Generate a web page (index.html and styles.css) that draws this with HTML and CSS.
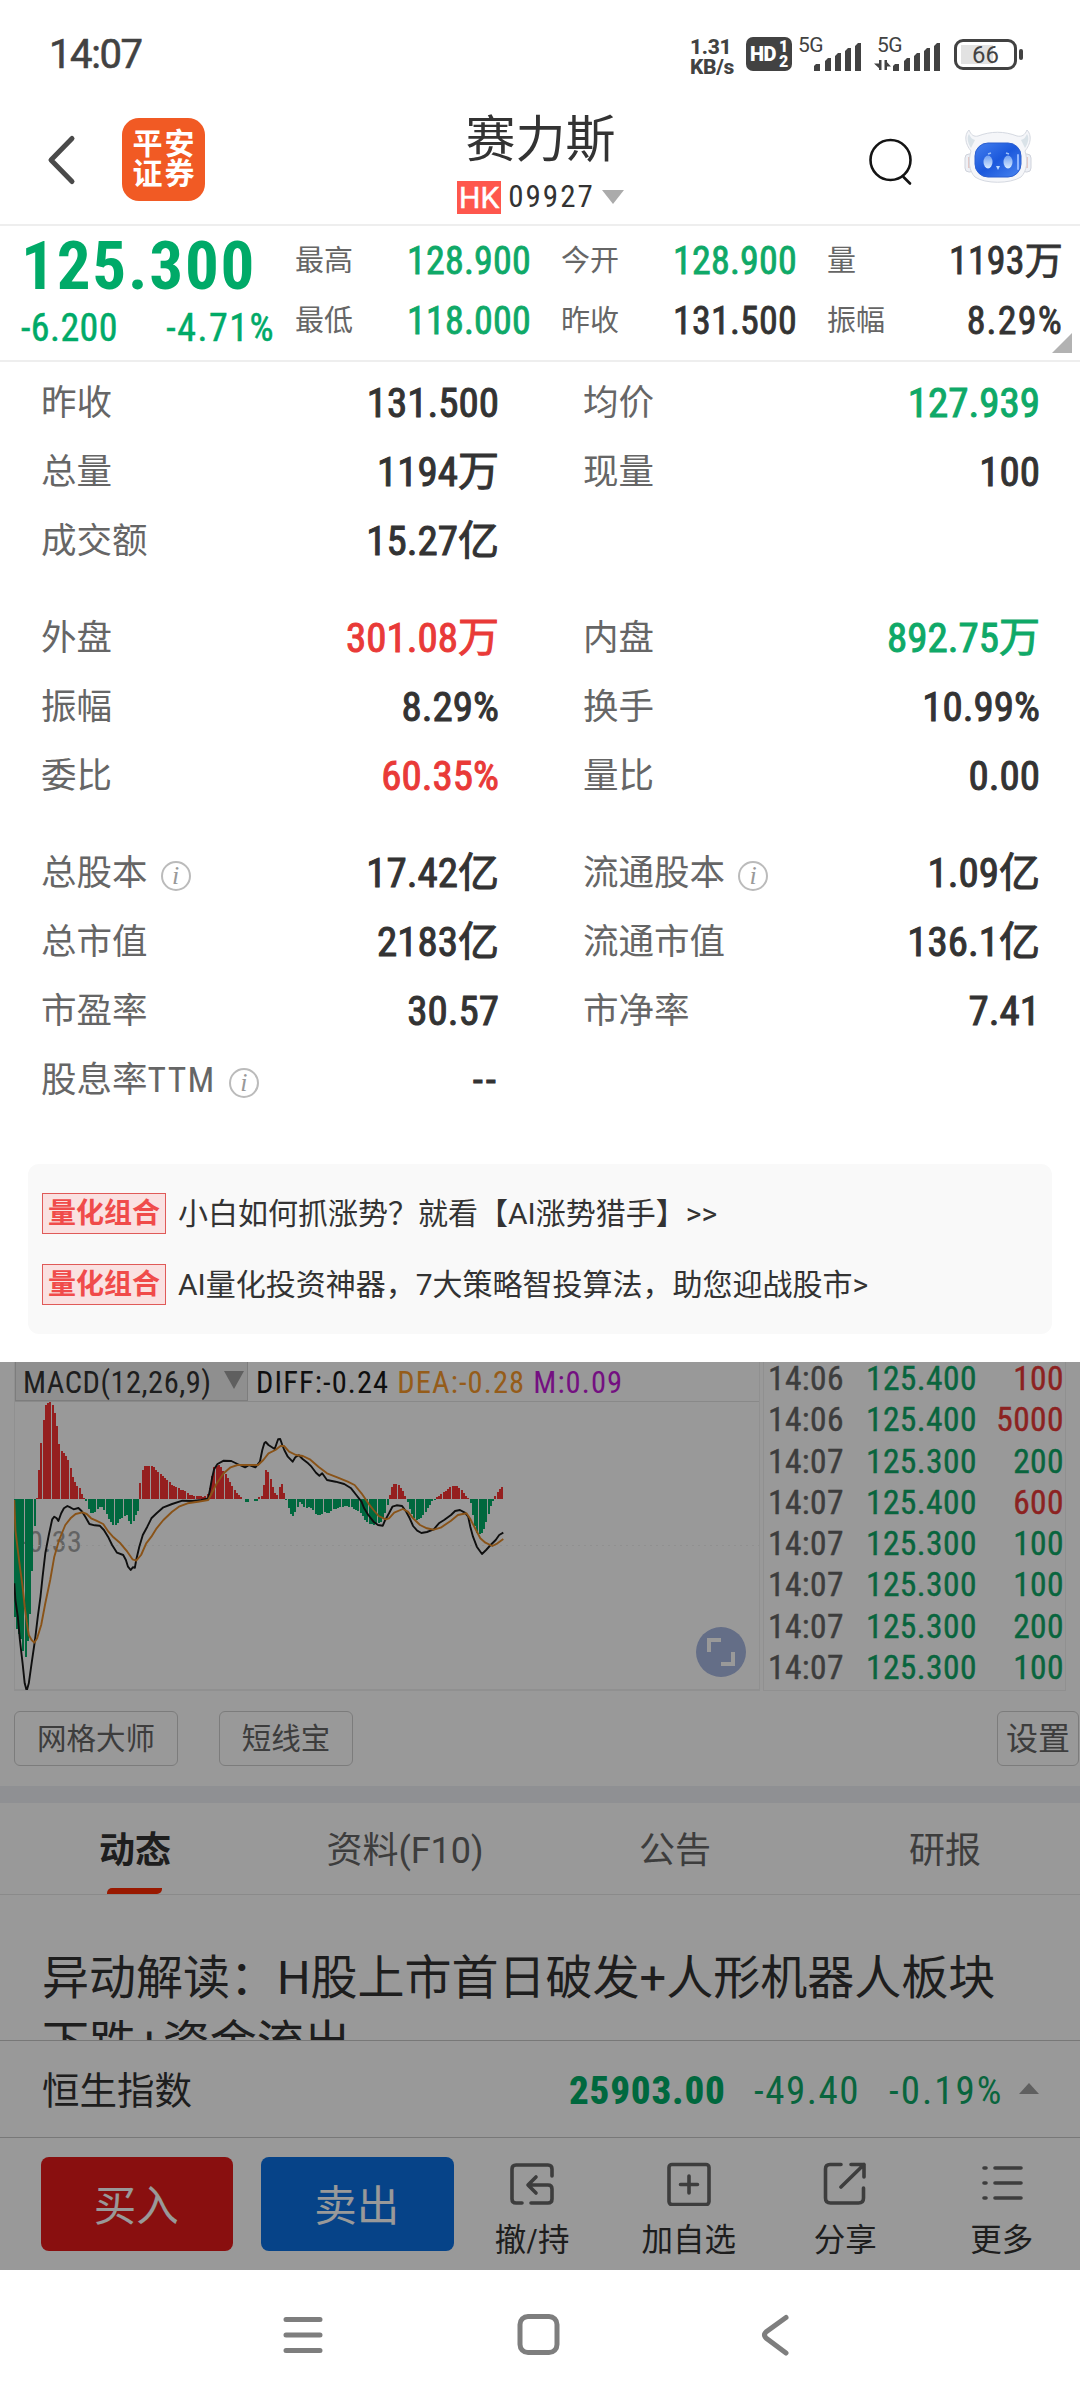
FILE: index.html
```
<!DOCTYPE html>
<html lang="zh">
<head>
    <meta charset="UTF-8">
    <meta name="viewport" content="width=device-width, initial-scale=1.0">
    <title>赛力斯 09927</title>
    <link rel="stylesheet" href="styles.css">
</head>
<body>
    <div class="status-bar">
        <span class="clock">14:07</span>
        <div class="net-speed"><span>1.31</span><span>KB/s</span></div>
        <div class="hd-badge"><span>HD</span><span class="hd-num"><i>1</i><i>2</i></span></div>
        <svg class="signal" width="66" height="36" viewBox="0 0 66 36" fill="#424242">
            <text x="0" y="15" class="net-type">5G</text>
            <path d="M16 34v-5l2-2h4v7zM27 34v-10l3-3h3v13zM37 34v-15l3-3h3v18zM47 34v-20l3-3h3v23zM57 34v-25l3-3h3v28z"/>
        </svg>
        <svg class="signal signal-2" width="68" height="36" viewBox="0 0 68 36" fill="#424242">
            <text x="3" y="15" class="net-type">5G</text>
            <path d="M5 33V23H7.500V33zM7 33 0 26.500H7zM10.500 33V23H13V33zM11 23l6 6.500h-6z"/>
            <path d="M19 34v-5l2-2h4v7zM30 34v-10l3-3h3v13zM40 34v-15l3-3h3v18zM50 34v-20l3-3h3v23zM60 34v-25l3-3h3v28z"/>
        </svg>
        <div class="battery"><span>66</span></div>
    </div>

    <div class="header">
        <svg class="back" width="30" height="52" viewBox="0 0 30 52"><path d="M25 4.500 4 26 25 47.500" fill="none" stroke="#4a4a4a" stroke-width="5" stroke-linecap="round" stroke-linejoin="round"/></svg>
        <div class="logo"><span>平安</span><span>证券</span></div>
        <div class="stock">
            <div class="stock-name">赛力斯</div>
            <div class="stock-code"><span class="market">HK</span>09927<i class="arrow-down"></i></div>
        </div>
        <svg class="search" width="44" height="48" viewBox="0 0 44 48" fill="none" stroke="#141414" stroke-width="2.6" stroke-linecap="round"><circle cx="21.500" cy="22" r="20"/><path d="M34.500 39 41 45.500"/></svg>
        <svg class="robot" width="68" height="56" viewBox="0 0 68 56">
            <defs>
                <linearGradient id="face" x1="0" y1="0" x2="1" y2="1">
                    <stop offset="0" stop-color="#4580ef"/>
                    <stop offset=".5" stop-color="#1b58dc"/>
                    <stop offset="1" stop-color="#4a86f0"/>
                </linearGradient>
                <linearGradient id="eye" x1="0" y1="0" x2="0" y2="1">
                    <stop offset="0" stop-color="#71a0f2"/>
                    <stop offset="1" stop-color="#d8ebff"/>
                </linearGradient>
            </defs>
            <rect x="1" y="26" width="9" height="18" rx="4" fill="#eef0f5" stroke="#cfd3dc"/>
            <rect x="58" y="26" width="9" height="18" rx="4" fill="#eef0f5" stroke="#cfd3dc"/>
            <path d="M5 29v11M63 29v11" stroke="#e3c8c6" stroke-width="2"/>
            <path d="M7 23C1 16 0 7 5 2c2 5 5 7 9 6 13-5 26-5 39 0 5 1 8-1 10-6 5 5 4 14-2 21 3 10 2 20-4 26-11 7-36 7-46 0C5 43 4 33 7 23z" fill="#f5f6f9" stroke="#d5d9e1"/>
            <path d="M7 20C3 14 3 9 5 6c2 4 3 5 6 6zM61 20c4-6 4-11 2-14-2 4-3 5-6 6z" fill="#d9e2e8"/>
            <rect x="11" y="15" width="46" height="34" rx="13" fill="url(#face)" stroke="#2b5ed0"/>
            <ellipse cx="24" cy="34" rx="4.500" ry="6.500" fill="url(#eye)"/>
            <ellipse cx="44" cy="34" rx="4.500" ry="6.500" fill="url(#eye)"/>
            <path d="M24 26l3-1M45 26l-3-1" stroke="#9dc0f8" stroke-width="1.500"/>
            <path d="M32 38h4l-2 4z" fill="#bcd9ff"/>
            <path d="M54 27v14" stroke="#8fb5ff" stroke-width="2" stroke-linecap="round"/>
        </svg>
    </div>

    <div class="quote">
        <div class="price-box">
            <div class="price">125.300</div>
            <div class="change"><span>-6.200</span><span class="pct">-4.71%</span></div>
        </div>
        <div class="quote-grid">
            <span>最高</span><b class="green">128.900</b><span>今开</span><b class="green">128.900</b><span>量</span><b>1193万</b>
            <span>最低</span><b class="green">118.000</b><span>昨收</span><b>131.500</b><span>振幅</span><b>8.29%</b>
        </div>
        <i class="corner"></i>
    </div>

    <div class="detail">
        <div class="group">
            <div class="item"><span>昨收</span><b>131.500</b></div>
            <div class="item"><span>均价</span><b class="green">127.939</b></div>
            <div class="item"><span>总量</span><b>1194万</b></div>
            <div class="item"><span>现量</span><b>100</b></div>
            <div class="item"><span>成交额</span><b>15.27亿</b></div>
        </div>
        <div class="group">
            <div class="item"><span>外盘</span><b class="red">301.08万</b></div>
            <div class="item"><span>内盘</span><b class="green">892.75万</b></div>
            <div class="item"><span>振幅</span><b>8.29%</b></div>
            <div class="item"><span>换手</span><b>10.99%</b></div>
            <div class="item"><span>委比</span><b class="red">60.35%</b></div>
            <div class="item"><span>量比</span><b>0.00</b></div>
        </div>
        <div class="group">
            <div class="item"><span>总股本</span><i class="info">i</i><b>17.42亿</b></div>
            <div class="item"><span>流通股本</span><i class="info">i</i><b>1.09亿</b></div>
            <div class="item"><span>总市值</span><b>2183亿</b></div>
            <div class="item"><span>流通市值</span><b>136.1亿</b></div>
            <div class="item"><span>市盈率</span><b>30.57</b></div>
            <div class="item"><span>市净率</span><b>7.41</b></div>
            <div class="item"><span>股息率<span class="ttm">TTM</span></span><i class="info">i</i><b class="none">--</b></div>
        </div>
        <div class="promo">
            <div class="promo-row"><span class="tag">量化组合</span>小白如何抓涨势？就看【AI涨势猎手】&gt;&gt;</div>
            <div class="promo-row"><span class="tag">量化组合</span>AI量化投资神器，7大策略智投算法，助您迎战股市&gt;</div>
        </div>
    </div>

    <div class="page">
        <div class="market-row">
            <div class="chart">
                <div class="chart-head">
                    <div class="indicator">MACD(12,26,9)<i></i></div>
                    <span>DIFF:-0.24</span><span class="dea">DEA:-0.28</span><span class="macd">M:0.09</span>
                </div>
                <svg id="macd" width="746" height="288" viewBox="0 0 746 288"></svg>
                <svg class="expand" width="50" height="50" viewBox="0 0 50 50"><circle cx="25" cy="25" r="25" fill="#a7b7e1"/><path d="M13 25V13h12M37 25v12H25" fill="none" stroke="#fff" stroke-width="4"/></svg>
            </div>
            <div class="ticks">
                <div><span>14:06</span><b>125.400</b><em class="red">100</em></div>
                <div><span>14:06</span><b>125.400</b><em class="red">5000</em></div>
                <div><span>14:07</span><b>125.300</b><em>200</em></div>
                <div><span>14:07</span><b>125.400</b><em class="red">600</em></div>
                <div><span>14:07</span><b>125.300</b><em>100</em></div>
                <div><span>14:07</span><b>125.300</b><em>100</em></div>
                <div><span>14:07</span><b>125.300</b><em>200</em></div>
                <div><span>14:07</span><b>125.300</b><em>100</em></div>
            </div>
        </div>
        <div class="tools">
            <span class="tool">网格大师</span>
            <span class="tool tool-short">短线宝</span>
            <span class="tool tool-set">设置</span>
        </div>
        <div class="tabs">
            <span class="active">动态</span><span>资料(F10)</span><span>公告</span><span>研报</span>
        </div>
        <div class="news">异动解读：H股上市首日破发+人形机器人板块下跌+资金流出</div>
        <div class="index-bar">
            <span class="index-name">恒生指数</span>
            <b>25903.00</b><span class="index-chg">-49.40</span><span class="index-pct">-0.19%</span><i></i>
        </div>
        <div class="actions">
            <button class="btn buy">买入</button>
            <button class="btn sell">卖出</button>
            <div class="action cancel">
                <svg width="44" height="44" viewBox="0 0 44 44"><path d="M42 14V7q0-4-4-4H6Q2 3 2 7v30q0 4 4 4h6M21 41h17q4 0 4-4V27q0-4-4-4H19M26 15l-8 8 8 8"/></svg>
                <span>撤/持</span>
            </div>
            <div class="action add">
                <svg width="44" height="44" viewBox="0 0 44 44"><rect x="2" y="2.500" width="40" height="40" rx="3"/><path d="M22 14v17M13.500 22.500h17"/></svg>
                <span>加自选</span>
            </div>
            <div class="action">
                <svg width="44" height="44" viewBox="0 0 44 44"><path d="M18 2.500H7Q2.500 2.500 2.500 7v29q0 5 5 5h28q5 0 5-5V26M28 2.500h13V15M41 2.500 18 25"/></svg>
                <span>分享</span>
            </div>
            <div class="action">
                <svg width="44" height="44" viewBox="0 0 44 44"><path d="M4 6h2M15 6h26M4 21h2M15 21h26M4 36h2M15 36h26"/></svg>
                <span>更多</span>
            </div>
        </div>
        <div class="mask"></div>
    </div>

    <div class="nav-bar">
        <svg width="40" height="44" viewBox="0 0 40 44"><path d="M3 6.500h34M3 22h34M3 37.500h34"/></svg>
        <svg class="home" width="44" height="44" viewBox="0 0 44 44"><rect x="3" y="3.500" width="37" height="36" rx="8"/></svg>
        <svg width="30" height="44" viewBox="0 0 30 44"><path d="M26 4.500 6 19q-3 3 0 6L26 40"/></svg>
    </div>

    <script src="chart.js"></script>
</body>
</html>
```
FILE: styles.css
```
* {
    box-sizing: border-box;
}
body {
    margin: 0;
    width: 1080px;
    background: #fff;
    color: #333;
    font-family: "Roboto Condensed", "Noto Sans CJK SC", sans-serif;
    overflow: hidden;
}
i, em {
    font-style: normal;
}
svg {
    display: block;
    flex: none;
}
.green {
    color: #0fa968;
}
.red {
    color: #e93a38;
}

/* status bar */
.status-bar {
    height: 104px;
    padding: 37px 57px 0 49px;
    display: flex;
    align-items: flex-start;
    color: #424242;
    font-family: Roboto, sans-serif;
}
.clock {
    margin-right: auto;
    font-size: 40px;
    line-height: 36px;
    letter-spacing: -1.4px;
    -webkit-text-stroke: 0.6px;
}
.net-speed {
    width: 48px;
    margin-right: 8px;
    font-size: 21px;
    line-height: 20px;
    font-weight: 800;
    letter-spacing: -0.3px;
}
.net-speed span {
    display: block;
    height: 20px;
}
.hd-badge {
    width: 46px;
    height: 34px;
    margin-right: 6px;
    padding-left: 4px;
    display: flex;
    align-items: center;
    border-radius: 7px;
    background: #424242;
    color: #fff;
    font-size: 20px;
    font-weight: 900;
    letter-spacing: -0.5px;
}
.hd-num {
    margin-left: 3px;
    font-size: 16px;
    line-height: 15px;
}
.hd-num i {
    display: block;
}
.signal {
    margin-right: 10px;
    overflow: visible;
}
.signal-2 {
    margin-right: 12px;
}
.net-type {
    font-size: 21px;
    letter-spacing: -0.5px;
}
.battery {
    position: relative;
    width: 63px;
    height: 31px;
    margin: 2px 6px 0 0;
    border: 3px solid #424242;
    border-radius: 9px;
    background: linear-gradient(#e2e2e2, #e2e2e2) 4px 3px / 32px 19px no-repeat;
    font-size: 24px;
    line-height: 26px;
    text-align: center;
}
.battery::after {
    content: "";
    position: absolute;
    right: -9px;
    top: 7px;
    width: 4px;
    height: 11px;
    border-radius: 2px;
    background: #424242;
}

/* header */
.header {
    height: 122px;
    padding: 0 48px 0 47px;
    display: flex;
    border-bottom: 2px solid #eee;
}
.back {
    margin-top: 30px;
}
.logo {
    width: 83px;
    height: 83px;
    margin: 14px 0 0 45px;
    padding: 11px 0 0 2px;
    border-radius: 17px;
    background: #f15a24;
    color: #fff;
    font-size: 30px;
    font-weight: 700;
    line-height: 30px;
    letter-spacing: 2px;
    text-align: center;
}
.logo span {
    display: block;
}
.stock {
    flex: 1;
    padding: 5px 0 0 7px;
    text-align: center;
}
.stock-name {
    font-size: 50px;
    line-height: 62px;
}
.stock-code {
    display: flex;
    justify-content: center;
    align-items: center;
    margin-top: 8px;
    font-size: 31px;
    line-height: 36px;
    letter-spacing: 2px;
}
.market {
    width: 44px;
    height: 33px;
    margin-right: 7px;
    background: #fe574d;
    color: #fff;
    font-family: Roboto, sans-serif;
    font-size: 30px;
    line-height: 34px;
    letter-spacing: 0;
    -webkit-text-stroke: 0.5px;
}
.arrow-down {
    margin-left: 7px;
    border: 11px solid transparent;
    border-top: 14px solid #ababab;
    border-bottom: 0;
}
.search {
    margin: 34px 51px 0 0;
}
.robot {
    margin-top: 24px;
}

/* quote */
.quote {
    position: relative;
    height: 136px;
    padding-right: 17px;
    display: flex;
    border-bottom: 2px solid #eee;
}
.price-box {
    width: 295px;
    padding: 7px 20px 0 21px;
    color: #00aa68;
}
.price {
    font-size: 67px;
    line-height: 66px;
    font-weight: 700;
    letter-spacing: 1.8px;
}
.change {
    display: flex;
    justify-content: space-between;
    margin-top: 9px;
    font-size: 38px;
    line-height: 40px;
    letter-spacing: 0.4px;
    -webkit-text-stroke: 0.5px;
}
.pct {
    letter-spacing: 1.5px;
}
.quote-grid {
    flex: 1;
    padding-top: 5px;
    display: grid;
    grid-template-columns: 86px 180px 86px 180px 86px 150px;
    grid-auto-rows: 60px;
    line-height: 60px;
}
.quote-grid span {
    color: #666;
    font-size: 29px;
}
.quote-grid b {
    padding-right: 30px;
    font-size: 38px;
    font-weight: 400;
    letter-spacing: 0.2px;
    text-align: right;
    -webkit-text-stroke: 0.8px;
}
.quote-grid b:nth-child(6n) {
    padding-right: 0;
}
.quote-grid b:last-child {
    letter-spacing: 1.2px;
}
.corner {
    position: absolute;
    right: 8px;
    bottom: 7px;
    border-bottom: 20px solid #b2b2b2;
    border-left: 20px solid transparent;
}

/* detail sheet */
.detail {
    height: 1000px;
    padding-top: 7px;
}
.group {
    display: grid;
    grid-template-columns: 458px 457px;
    column-gap: 84px;
    margin: 0 40px 28px 41px;
}
.item {
    display: flex;
    height: 69px;
    line-height: 69px;
    font-size: 35.500px;
    color: #666;
}
.item b {
    margin-left: auto;
    color: #333;
    font-size: 41px;
    font-weight: 400;
    -webkit-text-stroke: 1px;
}
.item b.red {
    color: #e93a38;
}
.item b.green {
    color: #0fa968;
}
.item b.none {
    letter-spacing: 3px;
}
.ttm {
    letter-spacing: 1.4px;
}
.info {
    width: 30px;
    height: 30px;
    margin: 22px 0 0 13px;
    border: 2px solid #bbb;
    border-radius: 50%;
    color: #999;
    font: italic 26px/25px "Liberation Serif", serif;
    text-align: center;
}
.promo {
    height: 170px;
    margin: 49px 28px 0;
    padding: 14px;
    border-radius: 11px;
    background: #f9f9f9;
}
.promo-row {
    display: flex;
    align-items: center;
    height: 71px;
    font-family: Roboto, "Noto Sans CJK SC", sans-serif;
    font-size: 30px;
    line-height: 38px;
    white-space: nowrap;
}
.tag {
    width: 124px;
    height: 41px;
    margin-right: 12px;
    border: 1px solid #e05a58;
    background: #fae1e1;
    color: #f04b4a;
    font-size: 28px;
    line-height: 40px;
    font-weight: 700;
    text-align: center;
}

/* page under the sheet */
.page {
    position: relative;
    height: 908px;
    overflow: hidden;
}
.mask {
    position: absolute;
    inset: 0;
    background: rgba(0, 0, 0, 0.4);
}
.market-row {
    display: flex;
    height: 329px;
    padding-left: 14px;
}
.chart {
    position: relative;
    width: 746px;
    border: 1px solid #f0f0f0;
    border-top: 0;
}
.chart-head {
    display: flex;
    height: 40px;
    border-bottom: 1px solid #e4e4e4;
    font-size: 30.500px;
    line-height: 42px;
    color: #1a1a1a;
}
.chart-head span {
    margin-left: 8px;
    letter-spacing: 1.1px;
    white-space: nowrap;
}
.indicator {
    display: flex;
    width: 233px;
    padding-left: 7px;
    border: 1px solid #d0d0d0;
    border-top: 0;
    background: #eee;
    color: #333;
    letter-spacing: 0.5px;
}
.indicator i {
    margin: 9px 3px 0 auto;
    height: 0;
    border: 10px solid transparent;
    border-top: 18px solid #9e9e9e;
    border-bottom: 0;
}
.chart-head .dea {
    color: #f89a2c;
}
.chart-head .macd {
    color: #c21bd8;
}
.chart svg {
    margin-left: -1px;
}
.axis {
    font-size: 30px;
    fill: #a6a6a6;
    letter-spacing: 0.5px;
}
.chart .expand {
    position: absolute;
    left: 682px;
    top: 265px;
}
.ticks {
    width: 303px;
    margin-left: 3px;
    padding: 0 1px 0 4px;
    border: 1px solid #f0f0f0;
    border-top: 0;
    font-size: 33.500px;
    line-height: 33px;
    letter-spacing: 0.4px;
    color: #666;
    -webkit-text-stroke: 0.4px;
}
.ticks div {
    display: flex;
    height: 41.250px;
}
.ticks span {
    width: 98px;
}
.ticks b, .ticks em {
    color: #0fa968;
    font-weight: 400;
}
.ticks em {
    margin-left: auto;
}
.ticks em.red {
    color: #e93a38;
}
.tools {
    display: flex;
    height: 95px;
    padding: 20px 1px 0 14px;
}
.tool {
    width: 164px;
    height: 55px;
    margin-right: 41px;
    border: 1px solid #cfcfcf;
    border-radius: 6px;
    color: #666;
    font-size: 29.500px;
    line-height: 55px;
    text-align: center;
}
.tool-short {
    width: 134px;
}
.tool-set {
    width: 82px;
    margin: 0 0 0 auto;
    font-size: 32px;
}
.tabs {
    display: flex;
    height: 109px;
    border-top: 17px solid #eff1f5;
    border-bottom: 1px solid #e6e6e6;
    font-family: Roboto, "Noto Sans CJK SC", sans-serif;
    font-size: 36px;
    line-height: 97px;
    color: #666;
}
.tabs span {
    position: relative;
    width: 270px;
    height: 91px;
    text-align: center;
}
.tabs .active {
    color: #333;
    font-weight: 700;
}
.tabs .active::after {
    content: "";
    position: absolute;
    left: 107px;
    bottom: 0;
    width: 55px;
    height: 6px;
    border-radius: 5px 0 5px 0;
    background: #ff2b00;
}
.news {
    height: 145px;
    padding: 50px 55px 0 42px;
    overflow: hidden;
    font-family: Roboto, "Noto Sans CJK SC", sans-serif;
    font-size: 47px;
    line-height: 65px;
}
.index-bar {
    display: flex;
    height: 98px;
    padding-left: 42px;
    border-top: 1px solid #c8c8c8;
    border-bottom: 1px solid #c8c8c8;
    font-size: 39px;
    line-height: 101px;
    color: #0fa968;
}
.index-name {
    width: 527px;
    color: #333;
    font-size: 37.500px;
}
.index-bar b {
    width: 185px;
    color: #00ad68;
    font-weight: 800;
    letter-spacing: 0.8px;
}
.index-chg {
    width: 135px;
    letter-spacing: 1.5px;
}
.index-pct {
    width: 116px;
    letter-spacing: 2px;
}
.index-bar i {
    margin: 42px 0 0 14px;
    height: 0;
    border: 10px solid transparent;
    border-bottom: 11px solid #a0a0a0;
    border-top: 0;
}
.actions {
    display: flex;
    padding: 19px 0 0 41px;
}
.btn {
    width: 193px;
    height: 94px;
    margin-right: 28px;
    padding: 0 2px 3px 0;
    border: 0;
    border-radius: 8px;
    background: #e41919;
    color: #fff;
    font-family: inherit;
    font-size: 42.500px;
}
.sell {
    margin-right: 0;
    background: #0a70e3;
}
.action {
    width: 157px;
    padding-top: 5px;
    font-size: 31.500px;
    line-height: 40px;
    text-align: center;
}
.action svg {
    margin: 0 auto 15px;
    fill: none;
    stroke: #666;
    stroke-width: 3.600;
    stroke-linecap: round;
    stroke-linejoin: round;
}
.action span {
    display: block;
}

/* system nav */
.nav-bar {
    display: flex;
    align-items: center;
    justify-content: space-between;
    height: 130px;
    padding: 0 290px 0 283px;
}
.nav-bar svg {
    fill: none;
    stroke: #7e7e7e;
    stroke-width: 5;
    stroke-linecap: round;
}
.nav-bar .home {
    margin-right: 5px;
}
```
FILE: chart.js
```
// Raw points: time offset, level. Scaled to the 746x288 plot below.
const bars = [45,800, 52,857, 58,850, 66,878, 72,928, 78,917, 84,855, 92,745, 98,590, 104,490, 110,423, 118,320, 124,245, 130,190, 136,157, 142,160, 150,153, 156,170, 162,195, 170,250, 176,305, 182,303, 190,315, 198,325, 204,342, 210,372, 216,390, 224,408, 232,412, 238,430, 244,445, 249,444, 255,465, 262,488, 275,488, 282,480, 290,470, 298,470, 306,482, 314,500, 322,515, 330,525, 340,523, 350,508, 360,500, 370,495, 378,520, 386,522, 392,500, 400,488, 404,475, 406,424, 412,365, 420,350, 428,347, 444,347, 452,358, 464,370, 480,383, 494,398, 504,408, 516,412, 528,420, 540,424, 552,434, 570,438, 590,440, 602,436, 608,425, 614,400, 618,372, 624,350, 640,343, 648,360, 656,372, 664,385, 672,400, 680,415, 690,430, 700,440, 708,446, 716,456, 722,456, 730,445, 742,453, 748,452, 754,440, 762,436, 768,400, 772,360, 780,364, 786,385, 792,408, 800,430, 806,436, 812,415, 818,397, 824,415, 828,440, 834,455, 842,485, 850,500, 858,488, 866,470, 872,455, 880,465, 890,475, 900,470, 910,480, 920,495, 935,495, 945,485, 955,492, 965,480, 980,475, 1000,468, 1020,470, 1035,480, 1050,490, 1060,508, 1070,520, 1090,525, 1105,518, 1118,495, 1125,470, 1130,447, 1136,420, 1142,403, 1155,402, 1164,412, 1175,428, 1183,450, 1190,475, 1200,498, 1212,510, 1224,505, 1236,488, 1246,470, 1256,455, 1264,448, 1272,440, 1285,430, 1298,420, 1310,410, 1330,408, 1342,420, 1352,435, 1362,444, 1368,460, 1374,495, 1382,535, 1390,555, 1400,550, 1408,535, 1416,505, 1424,475, 1432,455, 1438,440, 1446,425, 1455,415, 1462,408];
const diff = [42,700, 45,750, 52,800, 58,870, 66,940, 72,1000, 78,1022, 84,1000, 92,940, 102,870, 110,800, 118,740, 124,680, 132,610, 142,555, 152,508, 158,500, 165,505, 170,513, 178,490, 186,475, 196,468, 206,473, 214,478, 228,474, 238,484, 248,500, 260,522, 275,526, 290,527, 302,540, 314,560, 326,585, 340,608, 358,615, 366,630, 372,650, 380,660, 386,652, 392,653, 396,630, 405,590, 415,555, 428,530, 440,505, 455,490, 475,472, 500,462, 530,452, 560,453, 585,450, 605,445, 610,420, 616,385, 622,358, 632,342, 650,332, 672,333, 690,342, 712,352, 724,345, 742,352, 755,335, 762,300, 768,280, 772,276, 780,285, 798,297, 804,280, 808,268, 814,267, 820,285, 826,300, 836,320, 850,335, 858,322, 868,316, 880,328, 895,340, 905,350, 918,368, 928,377, 936,370, 950,390, 975,395, 1000,402, 1020,415, 1035,435, 1050,455, 1058,475, 1070,495, 1085,515, 1098,525, 1112,527, 1118,512, 1130,490, 1140,470, 1152,466, 1168,468, 1180,485, 1190,505, 1200,528, 1212,542, 1224,549, 1240,546, 1260,538, 1275,520, 1290,510, 1310,495, 1322,483, 1336,480, 1350,488, 1360,500, 1366,530, 1374,560, 1385,590, 1400,612, 1412,600, 1425,585, 1440,570, 1450,555, 1462,548];
const dea = [42,450, 45,540, 52,600, 58,650, 66,710, 72,770, 78,815, 84,855, 92,870, 100,878, 108,865, 120,825, 132,760, 146,690, 158,620, 172,570, 190,525, 205,505, 220,492, 240,487, 252,492, 265,505, 280,512, 300,522, 315,545, 330,562, 350,580, 370,605, 385,628, 396,632, 410,615, 425,580, 440,560, 455,535, 475,510, 500,485, 520,470, 545,460, 575,455, 605,450, 615,430, 630,400, 650,370, 670,352, 690,345, 750,345, 765,330, 780,310, 800,300, 815,288, 825,288, 840,305, 860,315, 880,318, 900,328, 925,350, 950,370, 980,382, 1010,395, 1030,405, 1050,430, 1070,460, 1085,480, 1100,498, 1120,508, 1130,505, 1145,488, 1170,477, 1185,485, 1200,505, 1220,525, 1240,535, 1260,539, 1280,533, 1310,512, 1330,495, 1355,490, 1365,505, 1380,535, 1395,565, 1410,578, 1430,588, 1445,580, 1462,567];

const sx = v => (v - 41) / 2.904;
const sy = v => (v - 156) / 3;

function valueAt(points, x) {
    for (let i = 2; i < points.length; i += 2) {
        if (x <= points[i]) {
            const t = (x - points[i - 2]) / (points[i] - points[i - 2]);
            return points[i - 1] + (points[i + 1] - points[i - 1]) * Math.max(t, 0);
        }
    }
    return points[points.length - 1];
}

function line(points, color) {
    let p = '';
    for (let i = 0; i < points.length; i += 2) {
        p += `${sx(points[i]).toFixed(1)},${sy(points[i + 1]).toFixed(1)} `;
    }
    return `<polyline points="${p}" fill="none" stroke="${color}" stroke-width="1.9" stroke-linejoin="round"/>`;
}

const zero = Math.round(sy(447));
let html = '<text class="axis" x="6" y="150">-0.33</text>';
html += '<path d="M0 143.500H746" stroke="#f0f0f0" stroke-dasharray="2 4"/>';
html += '<path d="M0 287.500H746" stroke="#f0f0f0"/>';
for (let i = 0; i < 218; i++) {
    const x = Math.floor(i * 2.247);
    const y = Math.round(sy(valueAt(bars, 43 + i * 2.247 * 2.904)));
    const up = y < zero;
    html += `<rect x="${x}" y="${up ? y : zero}" width="2" height="${Math.abs(y - zero)}" fill="${up ? '#f83434' : '#00ad68'}"/>`;
}
html += line(diff, '#1a1a1a') + line(dea, '#e58a28');
document.getElementById('macd').innerHTML = html;
```
